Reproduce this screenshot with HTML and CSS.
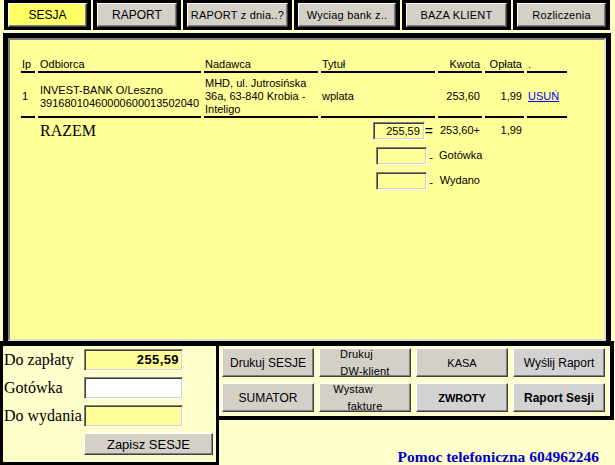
FILE: index.html
```html
<!DOCTYPE html>
<html lang="pl">
<head>
<meta charset="utf-8">
<title>Sesja</title>
<link rel="stylesheet" href="styles.css">
</head>
<body>
<div class="topbar">
  <div class="tab"><div class="btn tbtn active w1 big">SESJA</div></div>
  <div class="tab"><div class="btn tbtn w2 big">RAPORT</div></div>
  <div class="tab"><div class="btn tbtn w3">RAPORT z dnia..?</div></div>
  <div class="tab"><div class="btn tbtn w4">Wyciag bank z..</div></div>
  <div class="tab"><div class="btn tbtn w5">BAZA KLIENT</div></div>
  <div class="tab"><div class="btn tbtn w6">Rozliczenia</div></div>
</div>

<div class="main">
  <div class="main-inner">
    <table class="list">
      <colgroup>
        <col class="c-ip"><col class="c-odb"><col class="c-nad"><col class="c-tyt"><col class="c-kw"><col class="c-op"><col class="c-dot">
      </colgroup>
      <tr class="head">
        <td>Ip</td><td class="odb">Odbiorca</td><td>Nadawca</td><td>Tytuł</td><td class="r">Kwota</td><td class="r">Opłata</td><td>.</td>
      </tr>
      <tr class="item">
        <td>1</td>
        <td class="odb">INVEST-BANK O/Leszno<br>39168010460000600013502040</td>
        <td>MHD, ul. Jutrosińska<br>36a, 63-840 Krobia -<br>Inteligo</td>
        <td>wplata</td>
        <td class="r">253,60</td>
        <td class="r">1,99</td>
        <td><a class="link" href="#">USUŃ</a></td>
      </tr>
      <tr class="sum">
        <td></td><td class="odb razem">RAZEM</td><td></td>
        <td class="r"><span class="box wide">255,59</span><span class="eq">=</span></td>
        <td class="r">253,60+</td><td class="r">1,99</td><td></td>
      </tr>
      <tr class="sum">
        <td></td><td></td><td></td>
        <td class="r"><span class="box"></span><span class="dash">-</span></td>
        <td class="r">Gotówka</td><td></td><td></td>
      </tr>
      <tr class="sum">
        <td></td><td></td><td></td>
        <td class="r"><span class="box"></span><span class="dash">-</span></td>
        <td class="r">Wydano</td><td></td><td></td>
      </tr>
    </table>
  </div>
</div>

<div class="bottom">
  <div class="left">
    <div class="lbl">Do zapłaty</div><div class="field yellow strong">255,59</div>
    <div class="lbl">Gotówka</div><div class="field white"></div>
    <div class="lbl">Do wydania</div><div class="field yellow"></div>
    <div></div><div class="btn save">Zapisz SESJE</div>
  </div>
  <div class="rightcol">
    <div class="panel">
      <div class="btn pb f12">Drukuj SESJE</div>
      <div class="btn pb two"><div><span class="l1a">Drukuj</span><br>DW-klient</div></div>
      <div class="btn pb f11">KASA</div>
      <div class="btn pb f12 grey">Wyślij Raport</div>
      <div class="btn pb f12">SUMATOR</div>
      <div class="btn pb two"><div><span class="l1b">Wystaw</span><br>fakture</div></div>
      <div class="btn pb f11 bold grey">ZWROTY</div>
      <div class="btn pb f12 bold grey">Raport Sesji</div>
    </div>
    <div class="help">Pomoc telefoniczna 604962246</div>
  </div>
</div>
</body>
</html>
```

FILE: styles.css
```css
html, body {
  margin: 0;
  padding: 0;
}
body {
  background: #ffffcc;
  font-family: "Liberation Sans", Arial, sans-serif;
  font-size: 11px;
  color: #000;
  width: 615px;
  height: 465px;
  overflow: hidden;
}

/* classic 3D button */
.btn {
  box-sizing: border-box;
  background: #d4d0c8;
  border: 1px solid;
  border-color: #ffffff #404040 #404040 #ffffff;
  box-shadow: inset -1px -1px #808080;
  display: flex;
  align-items: center;
  justify-content: center;
  text-align: center;
  white-space: nowrap;
  color: #000;
}

/* top bar */
.topbar {
  display: flex;
  gap: 2px;
  margin-left: 4px;
  height: 30px;
}
.tab {
  background: #000;
  padding: 3px 4px;
  box-sizing: border-box;
  height: 30px;
}
.tbtn {
  height: 24px;
  font-size: 11px;
  letter-spacing: 0.2px;
}
.tbtn.big { font-size: 12px; letter-spacing: 0; }
.tbtn.active { background: #ffff66; }
.w1 { width: 79px; }
.w2 { width: 80px; }
.w3 { width: 101px; }
.w4 { width: 98px; }
.w5 { width: 101px; }
.w6 { width: 89px; }

/* main panel */
.main {
  margin: 3px 0 0 3px;
  width: 608px;
  height: 308px;
  box-sizing: border-box;
  border: 5px solid #000;
  border-bottom: 0;
}
.main-inner {
  height: 100%;
  box-sizing: border-box;
  border: 2px solid;
  border-color: #808080 #dcdcdc #dcdcdc #808080;
  background: #ffff99;
  padding-top: 18px;
}

.list {
  margin-left: 8px;
  table-layout: fixed;
  border-collapse: separate;
  border-spacing: 3px 0;
  width: 552px;
}
.c-ip { width: 14px; }
.c-odb { width: 163px; }
.c-nad { width: 114px; }
.c-tyt { width: 114px; }
.c-kw { width: 44px; }
.c-op { width: 39px; }
.c-dot { width: 40px; }

.list td {
  padding: 0 1px;
  line-height: 13px;
  white-space: nowrap;
}
.list td.odb { padding-left: 2px; }
.list td.r { text-align: right; padding-right: 2px; }

.head td {
  vertical-align: bottom;
  border-bottom: 2px solid #000;
}
.item td {
  vertical-align: middle;
  padding-top: 4px;
  height: 39px;
  border-bottom: 2px solid #000;
}
.sum td {
  height: 25px;
  vertical-align: middle;
}
.razem {
  font-family: "Liberation Serif", "Times New Roman", serif;
  font-size: 16px;
}
.link {
  color: #0000ff;
  text-decoration: underline;
}

.box {
  display: inline-block;
  box-sizing: border-box;
  width: 51px;
  height: 18px;
  vertical-align: middle;
  border: 1px solid;
  border-color: #808080 #ffffff #ffffff #808080;
  box-shadow: inset 1px 1px #404040, inset -1px -1px #d4d0c8;
  text-align: right;
  padding-right: 4px;
  line-height: 16px;
  font-size: 11px;
}
.box.wide { width: 52px; }
.eq {
  display: inline-block;
  vertical-align: middle;
  font-size: 14px;
  line-height: 14px;
}
.dash {
  display: inline-block;
  vertical-align: middle;
  margin-left: 2px;
  font-size: 11px;
  line-height: 13px;
  position: relative;
  top: 2px;
}

/* bottom area */
.bottom {
  display: flex;
}
.left {
  width: 219px;
  box-sizing: border-box;
  border: 3px solid #000;
  border-top-width: 5px;
  padding: 3px 0 0 1px;
  display: grid;
  grid-template-columns: 80px auto;
  grid-auto-rows: 22px;
  row-gap: 6px;
  align-items: center;
  justify-items: start;
}
.lbl {
  font-family: "Liberation Serif", "Times New Roman", serif;
  font-size: 16px;
  line-height: 18px;
  white-space: nowrap;
}
.field {
  box-sizing: border-box;
  width: 99px;
  height: 22px;
  border: 1px solid;
  border-color: #808080 #ffffff #ffffff #808080;
  box-shadow: inset 1px 1px #404040, inset -1px -1px #d4d0c8;
  text-align: right;
  padding-right: 3px;
  line-height: 20px;
}
.field.yellow { background: #ffff99; }
.field.white { background: #ffffff; }
.field.strong {
  font-weight: bold;
  font-size: 13px;
  letter-spacing: 0.4px;
}
.btn.save {
  width: 129px;
  height: 22px;
  font-size: 13px;
}

.rightcol {
  flex: 1;
}
.panel {
  width: 395px;
  box-sizing: border-box;
  border: solid #000;
  border-width: 5px 4px 4px 0;
  padding: 2px 5px 4px 3px;
  display: grid;
  grid-template-columns: repeat(4, 1fr);
  grid-template-rows: 29px 29px;
  gap: 6px 5px;
}
.pb { height: 29px; }
.pb.f12 { font-size: 12px; }
.pb.f11 { font-size: 11px; }
.pb.bold { font-weight: bold; }
.pb.grey { background: #d2d2d2; }
.pb.two {
  font-size: 11px;
  line-height: 17px;
  letter-spacing: 0.2px;
}
.l1a { padding-right: 17px; }
.l1b { padding-right: 24px; }

.help {
  margin-top: 28px;
  padding-right: 16px;
  text-align: right;
  font-family: "Liberation Serif", "Times New Roman", serif;
  font-weight: bold;
  font-size: 15.5px;
  line-height: 17px;
  color: #0000cc;
  white-space: nowrap;
}
```
